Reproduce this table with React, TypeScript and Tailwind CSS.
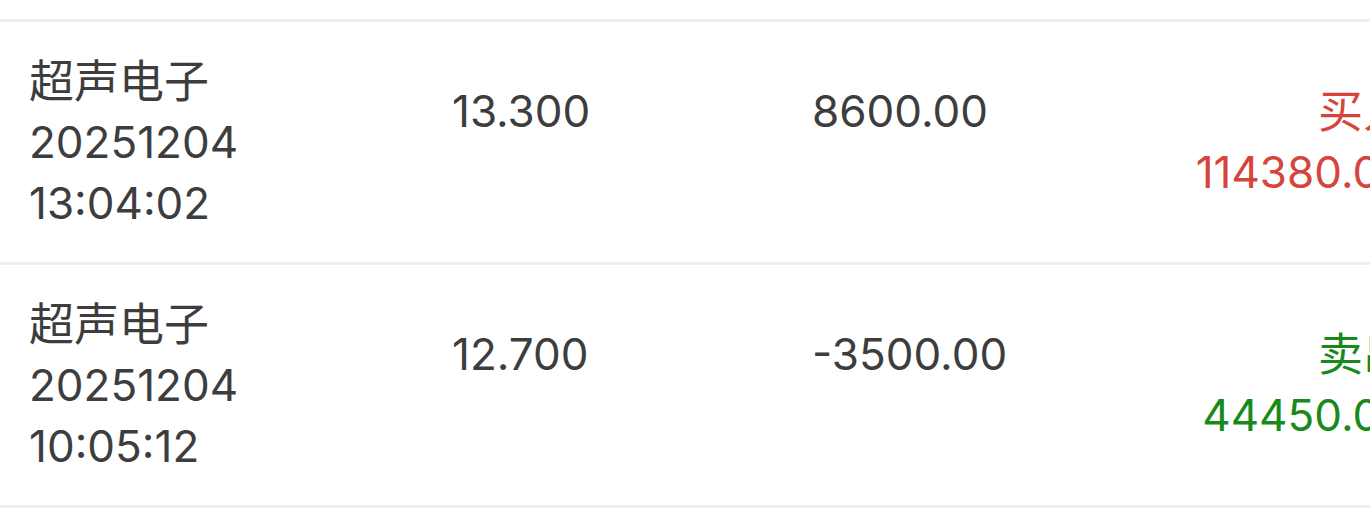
import React from "react";

type Trade = {
  name: string;
  date: string;
  time: string;
  price: string;
  qty: string;
  side: string;
  amount: string;
  buy: boolean;
};

const trades: Trade[] = [
  { name: "超声电子", date: "20251204", time: "13:04:02", price: "13.300", qty: "8600.00", side: "买入", amount: "114380.00", buy: true },
  { name: "超声电子", date: "20251204", time: "10:05:12", price: "12.700", qty: "-3500.00", side: "卖出", amount: "44450.00", buy: false },
];

const font = "font-['Inter','Noto_Sans_CJK_SC',sans-serif]";

function TradeRow({ t }: { t: Trade }) {
  const tone = t.buy ? "text-[#d6453b]" : "text-[#188a1c]";
  return (
    <div className="flex items-center h-[243px] border-b-[3px] border-[#eeeeee]">
      {/* name + timestamp */}
      <div className="w-[452px] pl-[29px] shrink-0 flex flex-col leading-[61px]">
        <span className="text-[45px]">{t.name}</span>
        <span>{t.date}</span>
        <span>{t.time}</span>
      </div>
      {/* price */}
      <div className="w-[360px] shrink-0 h-[122px] leading-[61px]">{t.price}</div>
      {/* quantity */}
      <div className="flex-1 h-[122px] leading-[61px]">{t.qty}</div>
      {/* side + amount */}
      <div className={`flex flex-col items-end leading-[61px] pr-[32px] ${tone}`}>
        <span className="text-[45px]">{t.side}</span>
        <span>{t.amount}</span>
      </div>
    </div>
  );
}

export default function App() {
  return (
    <div className="w-[1370px] h-[510px] overflow-hidden bg-white">
      <div className={`w-[1440px] text-[44px] text-[#3d3d3d] ${font}`}>
        <div className="h-[22px] border-b-[3px] border-[#eeeeee]" />
        {trades.map((t, i) => (
          <TradeRow key={i} t={t} />
        ))}
      </div>
    </div>
  );
}
